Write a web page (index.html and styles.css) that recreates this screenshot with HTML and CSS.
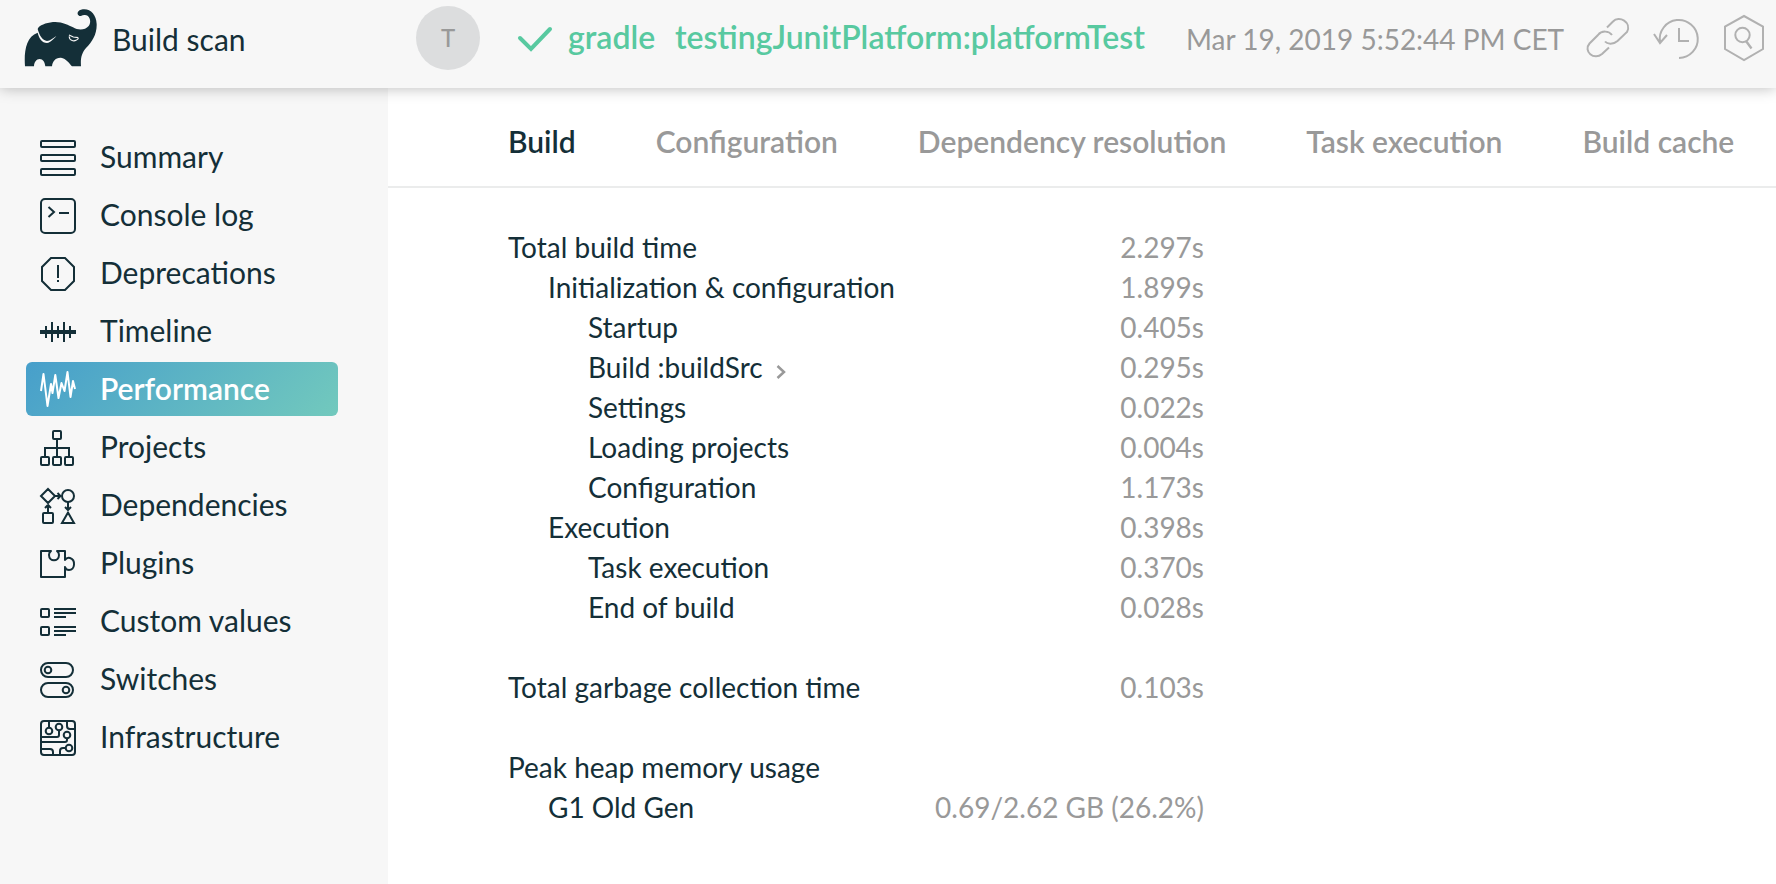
FILE: index.html
```html
<!DOCTYPE html>
<html lang="en">
<head>
<meta charset="utf-8">
<title>Build scan</title>
<link rel="stylesheet" href="styles.css">
</head>
<body>
<header class="header">
  <div class="brand">
    <svg class="logo" viewBox="72 24 222 180"><path fill="#142f38" d="M75 199C72 160 76 110 113 98C117 115 126 129 141 129C153 127 161 117 169 108C158 115 151 122 141 123C127 121 119 108 113 87C118 75 137 69 159 66C186 64 205 75 219 82C235 92 255 91 266 78C275 65 270 46 255 45C245 44 246 49 238 48C229 43 232 32 243 29C267 22 289 40 290 72C291 103 277 125 258 144C246 158 241 173 243 199H216C210 192 198 175 183 173C166 172 157 185 156 199H136C134 186 129 177 119 177C109 177 102 187 102 199Z"/><path fill="none" stroke="#f7f7f7" stroke-width="3.500" d="M207 105L220 111L235 113M208 109C207 121 221 125 228 121C233 119 235 117 235 114"/></svg>
    <span class="brand-name">Build scan</span>
  </div>
  <div class="avatar">T</div>
  <svg class="check" viewBox="0 0 36 28"><path d="M3 12L14 23L33 3"/></svg>
  <span class="tool">gradle</span>
  <span class="tasks">testingJunitPlatform:platformTest</span>
  <time class="date">Mar 19, 2019 5:52:44 PM CET</time>
  <div class="actions">
    <svg class="action" viewBox="1586 16 44 44"><path d="M1607 27.500L1613 21.500C1619 15 1632 22 1627 32L1617.500 41C1613 45 1607 44 1605 41.500M1612 35C1609 31 1602 30 1598 35L1589.500 43.500C1583 51 1594 61 1602 54L1609 47.500"/></svg>
    <svg class="action history" viewBox="1652 16 48 44"><path d="M1679 58A19 19 0 1 0 1660 42M1654 34L1660 43L1667 35M1679 28V41H1689"/></svg>
    <svg class="action hexagon" viewBox="1722 13 44 50"><path d="M1744 16L1763 26.500V49L1744 60L1725 49V26.500Z"/><circle cx="1742.500" cy="35" r="7.200"/><path stroke-width="2.400" d="M1746 41L1751.500 48.500"/></svg>
  </div>
</header>
<div class="layout">
  <nav class="sidebar">
    <a class="item"><svg class="icon" viewBox="0 0 36 36"><rect x="1" y="1" width="34" height="6" rx="1"/><rect x="1" y="15" width="34" height="6" rx="1"/><rect x="1" y="29" width="34" height="6" rx="1"/></svg>Summary</a>
    <a class="item"><svg class="icon" viewBox="0 0 36 36"><rect x="1" y="1" width="34" height="34" rx="4"/><path d="M8.500 9L14 14L8.500 19M19 15H29"/></svg>Console log</a>
    <a class="item"><svg class="icon" viewBox="0 0 36 36"><path d="M11 2H25L34 11V25L25 34H11L2 25V11ZM18 9V22M18 24V26"/></svg>Deprecations</a>
    <a class="item"><svg class="icon" viewBox="0 0 36 36"><path stroke-width="4" d="M0 18H36"/><path d="M6 12V24M12 8V28M18 12V24M24 8V28M30 12V24"/></svg>Timeline</a>
    <a class="item active"><svg class="icon" viewBox="0 0 36 36"><path stroke-linejoin="round" d="M1 19L3.500 2L7.500 34L11 12L12.500 21L15.300 3L18.500 26L21.500 11L24.500 19L27.500 0L30.500 25L33 9L35 17"/></svg>Performance</a>
    <a class="item"><svg class="icon" viewBox="0 0 36 36"><rect x="13" y="1" width="8" height="8" rx="1"/><rect x="1" y="27" width="8" height="8" rx="1"/><rect x="13" y="27" width="8" height="8" rx="1"/><rect x="25" y="27" width="8" height="8" rx="1"/><path d="M17 9V27M5 27V18H29V27"/></svg>Projects</a>
    <a class="item"><svg class="icon" viewBox="0 0 36 36"><path d="M8 1L15 8L8 15L1 8ZM15 8H20M17.500 5L20.500 8L17.500 11M8 25V17M5 20L8 17L11 20M28 14V22M25 19L28 22L31 19M28 24.500L34 35H22Z"/><circle cx="28" cy="8" r="6"/><rect x="3" y="25" width="10" height="10" rx="1"/></svg>Dependencies</a>
    <a class="item"><svg class="icon" viewBox="0 0 36 36"><path stroke-linejoin="round" d="M1 5H11Q9 6 9 9C9 16 19 16 19 9Q19 6 17 5H25V14Q27 11 30 12C36 14 35 24 29 24Q26 24 25 21V31H1Z"/></svg>Plugins</a>
    <a class="item"><svg class="icon" viewBox="0 0 36 36"><rect x="1" y="5" width="8" height="8" rx="1"/><rect x="1" y="23" width="8" height="8" rx="1"/><path d="M14 5H36M14 9H36M14 13H26M14 23H36M14 27H36M14 31H26"/></svg>Custom values</a>
    <a class="item"><svg class="icon" viewBox="0 0 36 36"><rect x="1" y="1" width="32" height="14" rx="7"/><rect x="1" y="21" width="32" height="14" rx="7"/><circle cx="8" cy="8" r="3.300"/><circle cx="26" cy="28" r="3.300"/></svg>Switches</a>
    <a class="item"><svg class="icon" viewBox="0 0 36 36"><rect x="1" y="1" width="34" height="34" rx="3"/><circle cx="9" cy="11" r="3.300"/><circle cx="19" cy="7" r="3.300"/><circle cx="27" cy="15" r="3.300"/><circle cx="29" cy="28" r="3.300"/><path d="M9 1V7M19 11V15Q19 17 17 17H1M27 19V20Q27 22 25 22H1M27 1V6Q27 9 30 9H35M1 29H10Q13 29 13 32V35M20 35V31Q20 28 23 28H25"/></svg>Infrastructure</a>
  </nav>
  <main class="main">
    <div class="tabs">
      <a class="tab selected">Build</a><a class="tab">Configuration</a><a class="tab">Dependency resolution</a><a class="tab">Task execution</a><a class="tab">Build cache</a>
    </div>
    <div class="report">
      <div class="row"><span>Total build time</span><span class="value">2.297s</span></div>
      <div class="row level1"><span>Initialization &amp; configuration</span><span class="value">1.899s</span></div>
      <div class="row level2"><span>Startup</span><span class="value">0.405s</span></div>
      <div class="row level2"><span>Build :buildSrc<svg class="chevron" viewBox="0 0 10 16"><path d="M1.500 2L8 8L1.500 14"/></svg></span><span class="value">0.295s</span></div>
      <div class="row level2"><span>Settings</span><span class="value">0.022s</span></div>
      <div class="row level2"><span>Loading projects</span><span class="value">0.004s</span></div>
      <div class="row level2"><span>Configuration</span><span class="value">1.173s</span></div>
      <div class="row level1"><span>Execution</span><span class="value">0.398s</span></div>
      <div class="row level2"><span>Task execution</span><span class="value">0.370s</span></div>
      <div class="row level2"><span>End of build</span><span class="value">0.028s</span></div>
      <div class="row section"><span>Total garbage collection time</span><span class="value">0.103s</span></div>
      <div class="row section"><span>Peak heap memory usage</span></div>
      <div class="row level1"><span>G1 Old Gen</span><span class="value">0.69/2.62 GB (26.2%)</span></div>
    </div>
  </main>
</div>
</body>
</html>
```

FILE: styles.css
```css
* { box-sizing: border-box; }
body { margin: 0; height: 884px; overflow: hidden; display: flex; flex-direction: column; background: #fff; color: #142f38; font-family: Lato, sans-serif; white-space: nowrap; }
.header { height: 88px; flex: none; display: flex; align-items: center; background: #f7f7f7; box-shadow: 0 0 14px rgba(0,0,0,.28); position: relative; padding-bottom: 12px; }
.brand { width: 416px; flex: none; display: flex; align-items: center; padding-left: 24px; }
.logo { width: 74px; height: 60px; }
.brand-name { margin-left: 14px; padding-top: 1px; font-size: 30px; }
.avatar { width: 64px; height: 64px; flex: none; border-radius: 50%; background: #dcddde; color: #999; font-size: 24px; font-weight: 500; line-height: 63px; text-align: center; }
.check { width: 36px; height: 28px; flex: none; margin-left: 37px; margin-top: 3px; }
.check path { fill: none; stroke: #58c9a0; stroke-width: 4; stroke-linecap: round; }
.tool, .tasks { color: #58c9a0; font-size: 32px; font-weight: 600; padding-bottom: 4px; }
.tool { margin-left: 15px; width: 107px; flex: none; }
.tasks { width: 511px; flex: none; }
.date { color: #999; font-size: 28px; width: 400px; flex: none; padding-top: 1px; }
.actions { display: flex; align-items: center; }
.action { width: 44px; height: 44px; flex: none; fill: none; stroke: #b1b1b1; stroke-width: 2; }
.history { width: 48px; margin-left: 22px; }
.hexagon { height: 50px; margin-left: 22px; }
.layout { flex: 1; display: flex; }
.sidebar { width: 388px; flex: none; background: #f7f7f7; padding: 42px 50px 0 26px; display: flex; flex-direction: column; gap: 4px; }
.item { height: 54px; flex: none; display: flex; align-items: center; gap: 24px; padding: 0 0 2px 14px; border-radius: 6px; font-size: 30px; }
.icon { width: 36px; height: 36px; margin-top: 4px; overflow: visible; fill: none; stroke: currentColor; stroke-width: 2; }
.active { color: #fff; font-weight: 600; background: linear-gradient(135deg, #479fcb, #72c9bd); }
.main { flex: 1; min-width: 0; }
.tabs { height: 100px; border-bottom: 2px solid #ebecec; display: flex; align-items: center; gap: 80px; padding: 7px 0 0 120px; color: #999; font-size: 30px; font-weight: 600; }
.selected { color: #142f38; }
.report { width: 816px; padding: 39px 0 0 120px; font-size: 28px; }
.row { height: 40px; line-height: 40px; display: flex; justify-content: space-between; }
.level1 { padding-left: 40px; }
.level2 { padding-left: 80px; }
.section { margin-top: 40px; }
.value { color: #999; }
.chevron { width: 10px; height: 16px; margin-left: 13px; vertical-align: -2px; fill: none; stroke: #999; stroke-width: 2.5; }
```
